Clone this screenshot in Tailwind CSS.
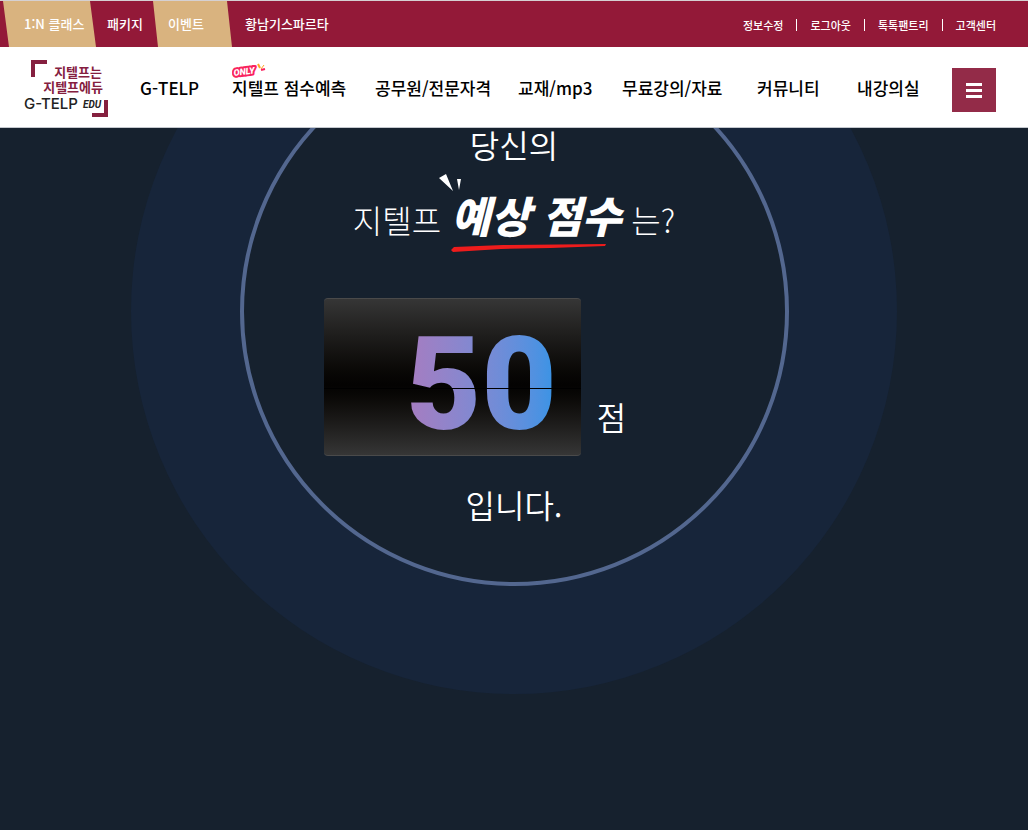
<!DOCTYPE html>
<html lang="ko">
<head>
<meta charset="utf-8">
<meta name="viewport" content="width=device-width, initial-scale=1">
<title>지텔프 예상 점수</title>
<script src="https://cdn.jsdelivr.net/npm/@tailwindcss/browser@4"></script>
</head>
<body class="flex min-h-screen flex-col bg-[#16212e] font-['Noto_Sans_CJK_KR',sans-serif]">
<header class="relative z-10 border-b border-[#c4c8ce] bg-white">
  <div class="flex h-[47px] items-stretch justify-between border-t border-[#d5d0d2] bg-[#931938] text-white">
    <nav class="relative flex items-center text-[13px] font-medium" aria-label="바로가기">
      <svg class="absolute top-0 left-0 h-full w-[240px]" viewBox="0 0 240 46" preserveAspectRatio="none" aria-hidden="true">
        <path d="M3 0H90L96 46H9Z M153 0H227L232 46H158Z" fill="#d9b37f"/>
      </svg>
      <a href="#" class="relative w-[107px] pl-6">1:N 클래스</a>
      <a href="#" class="relative w-[61px]">패키지</a>
      <a href="#" class="relative w-[77px]">이벤트</a>
      <a href="#" class="relative">황남기스파르타</a>
    </nav>
    <nav class="flex items-center gap-[13px] pt-[2px] pr-8 text-[11px] font-medium" aria-label="회원 메뉴">
      <a href="#">정보수정</a><i class="h-3 w-px bg-white"></i>
      <a href="#">로그아웃</a><i class="h-3 w-px bg-white"></i>
      <a href="#">톡톡팬트리</a><i class="h-3 w-px bg-white"></i>
      <a href="#">고객센터</a>
    </nav>
  </div>
  <div class="flex h-20 items-center gap-8 pt-[2px] pr-8 pl-6">
    <a href="#" aria-label="지텔프에듀 홈" class="block shrink-0">
      <svg width="84" height="58" viewBox="0 0 84 58">
        <path d="M7 1H23V5H11V18H7Z M68 54H80V41H84V58H68Z" fill="#85203f"/>
        <g fill="#85203f" font-family="Noto Sans CJK KR" font-weight="700" font-size="13" text-anchor="end">
          <text x="78" y="18">지텔프는</text>
          <text x="79" y="33">지텔프에듀</text>
        </g>
        <text x="0" y="50" font-family="Inter" font-weight="500" font-size="15" fill="#222">G-TELP</text>
        <text x="59" y="49" font-family="Roboto" font-weight="700" font-style="italic" font-size="10" fill="#222">EDU</text>
      </svg>
    </a>
    <div class="flex flex-1 items-center">
      <nav class="grid flex-1 grid-cols-[92fr_143fr_143fr_104fr_135fr_100fr_95fr] text-[17px] font-medium whitespace-nowrap text-black" aria-label="주 메뉴">
        <a href="#">G-TELP</a>
        <a href="#" class="relative">
          <svg class="absolute -top-3 left-0" width="35" height="18" viewBox="0 0 35 18" aria-hidden="true">
            <text x="2" y="13" transform="rotate(-7 2 13)" font-family="Roboto" font-weight="900" font-style="italic" font-size="9" fill="#fff" stroke="#f9235e" stroke-width="4" stroke-linejoin="round" paint-order="stroke">ONLY</text>
            <path d="M28 5L26 1" stroke="#ffa51f" stroke-width="2"/><path d="M29 6L32 2" stroke="#ffa51f" stroke-width="1"/><path d="M29 7L33 6" stroke="#f9235e" stroke-width="2"/>
          </svg>지텔프 점수예측</a>
        <a href="#">공무원/전문자격</a>
        <a href="#">교재/mp3</a>
        <a href="#">무료강의/자료</a>
        <a href="#">커뮤니티</a>
        <a href="#">내강의실</a>
      </nav>
      <button type="button" aria-label="전체 메뉴" class="mt-1 flex size-11 flex-col items-center justify-center gap-[3px] bg-[#932b48]">
        <i class="h-[3px] w-4 bg-white"></i><i class="h-[3px] w-4 bg-white"></i><i class="h-[3px] w-4 bg-white"></i>
      </button>
    </div>
  </div>
</header>
<main class="relative flex flex-1 flex-col items-center text-[32px] font-[350] text-white">
  <div class="absolute -top-[200px] left-1/2 flex size-[766px] -translate-x-1/2 items-center justify-center rounded-full bg-[#17253a]">
    <div class="size-[549px] rounded-full border-4 border-[#53678f] bg-[#16212e]"></div>
  </div>
  <p class="relative leading-8">당신의</p>
  <h1 class="relative mt-[30px] flex items-baseline gap-[10px] leading-12 font-light">지텔프 <strong class="relative text-[43px] font-black italic">예상 점수
      <svg class="absolute -top-4 -left-3" width="30" height="20" viewBox="0 0 30 20" aria-hidden="true"><path d="M0 4L7 0L14 17Z M18 5H22L20 16Z" fill="#fff"/></svg>
      <svg class="absolute top-[54px] left-0" width="156" height="8" viewBox="0 0 156 8" aria-hidden="true"><path d="M0 6L3 3L52 1L155 0L154 2L100 4L50 5L2 8Z" fill="#ee1c1c"/></svg>
    </strong> 는?</h1>
  <div class="relative mt-[55px] mr-[78px] flex items-end gap-4">
    <div class="relative h-[158px] w-[257px] rounded border-y border-[#4a4a4a] bg-linear-to-b from-[#363636] via-[#040302] via-55% to-[#363636] pr-6 text-right">
      <span class="inline-block bg-linear-to-r from-[#a77cc0] to-[#3494e6] bg-clip-text font-['Roboto'] text-[130px] leading-[172px] font-black text-transparent">50</span>
      <i class="absolute top-[89px] left-0 h-px w-full bg-black"></i>
    </div>
    <span class="pb-4 leading-12">점</span>
  </div>
  <p class="relative mt-6 leading-12">입니다.</p>
</main>
</body>
</html>
